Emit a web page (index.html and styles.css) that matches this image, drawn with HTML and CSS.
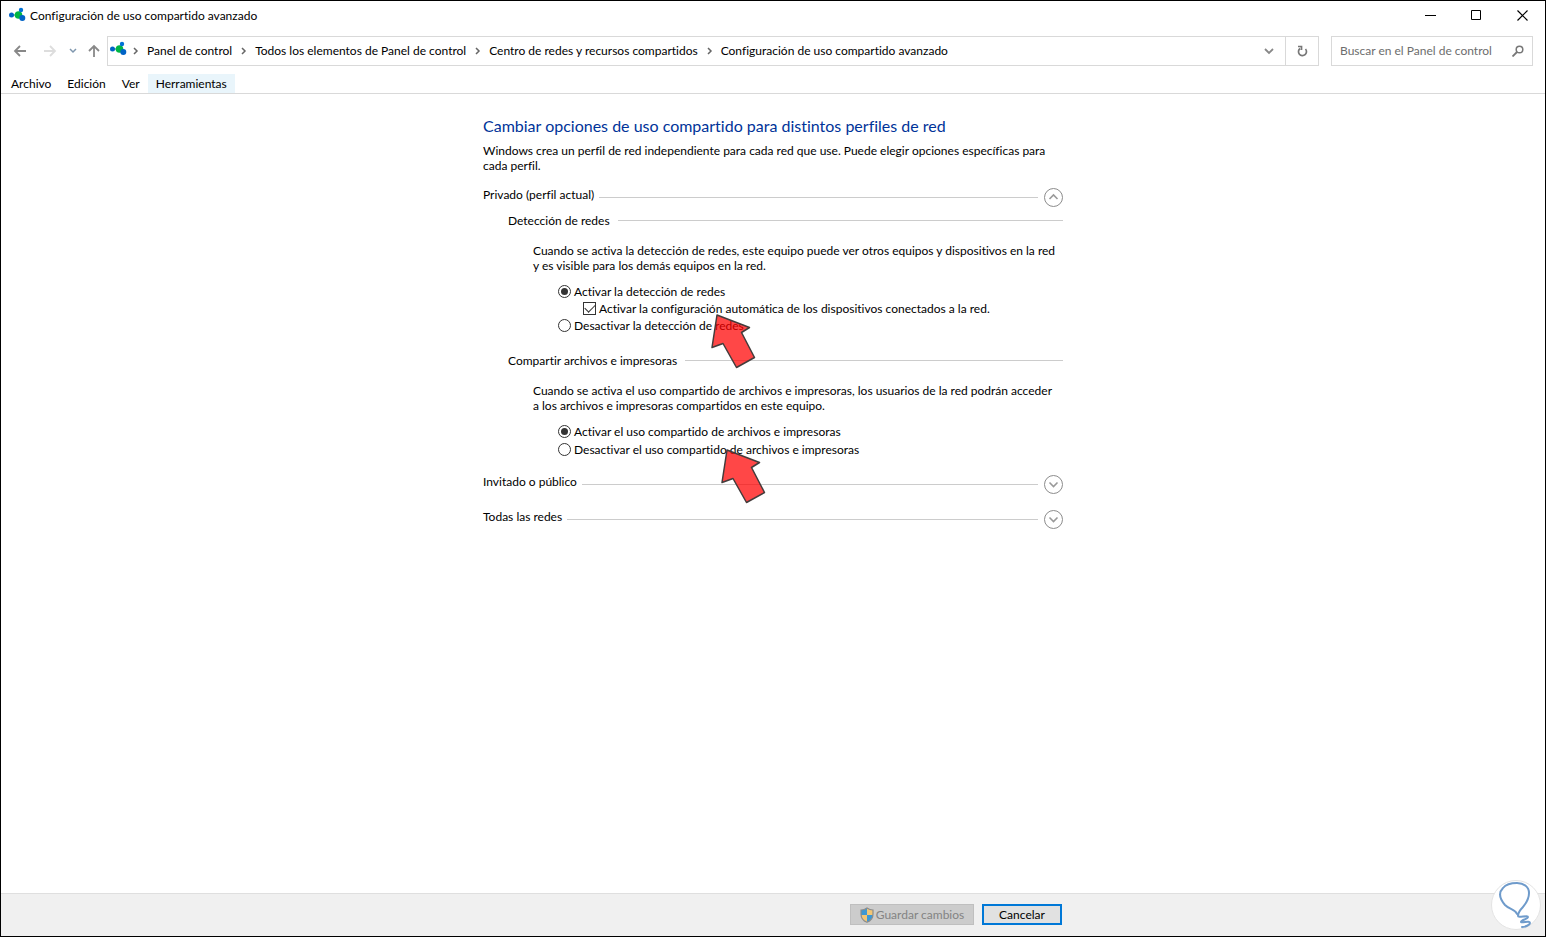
FILE: index.html
```
<!DOCTYPE html>
<html lang="es">
<head>
    <meta charset="UTF-8">
    <meta name="viewport" content="width=device-width, initial-scale=1.0">
    <title>Configuración de uso compartido avanzado</title>
    <link rel="stylesheet" href="styles.css">
</head>
<body>
    <!-- shared symbols -->
    <svg class="symbols" width="0" height="0">
        <symbol id="network" viewBox="0 0 18 16">
            <path d="M3 8h7M10 8l3-5M10 8l4 3" stroke="#0a9a5a" stroke-width="1"/>
            <circle cx="10.500" cy="8" r="3.800" fill="#00b545"/>
            <circle cx="3.500" cy="8" r="2.500" fill="#0063c6"/>
            <circle cx="13" cy="3" r="2.200" fill="#0072d6"/>
            <circle cx="14.300" cy="11" r="3" fill="#0063c6"/>
        </symbol>
        <symbol id="crumb" viewBox="0 0 23 10">
            <path d="M10 2l3 3-3 3" fill="none" stroke="#666" stroke-width="1.500"/>
        </symbol>
        <symbol id="arrow" viewBox="0 0 46 56">
            <path d="M7 2L39.500 14.500 31.500 19.500 44.500 44.500 26.500 54.500 13 30.500 2 34.500Z" fill="#f00" fill-opacity=".72" stroke="#443c3c" stroke-width="1.500" stroke-linejoin="round"/>
        </symbol>
    </svg>

    <div class="window">
        <header>
            <div class="titlebar">
                <svg width="18" height="16"><use href="#network"/></svg>
                <span class="title">Configuración de uso compartido avanzado</span>
                <div class="window-buttons">
                    <button aria-label="Minimizar"><svg width="11" height="11"><path d="M0 5.500h11" stroke="#000"/></svg></button>
                    <button aria-label="Maximizar"><svg width="11" height="11"><path d="M.5.5h9v9h-9z" fill="none" stroke="#000"/></svg></button>
                    <button aria-label="Cerrar"><svg width="11" height="11"><path d="M.5.5l10 10M10.500.5l-10 10" stroke="#000" stroke-width="1.200"/></svg></button>
                </div>
            </div>

            <div class="navbar">
                <div class="nav-buttons">
                    <button aria-label="Atrás"><svg width="14" height="14"><path d="M7 2L2 7l5 5M2 7h11" fill="none" stroke="#888" stroke-width="1.800"/></svg></button>
                    <button aria-label="Adelante" disabled><svg width="14" height="14"><path d="M7 2l5 5-5 5M12 7H1" fill="none" stroke="#ddd" stroke-width="1.800"/></svg></button>
                    <button class="recent" aria-label="Ubicaciones recientes"><svg width="8" height="6"><path d="M1 1l3 3 3-3" fill="none" stroke="#7f97ae" stroke-width="1.500"/></svg></button>
                    <button class="up" aria-label="Subir"><svg width="14" height="14"><path d="M2 7l5-5 5 5M7 2v11" fill="none" stroke="#888" stroke-width="1.800"/></svg></button>
                </div>
                <div class="address">
                    <svg class="address-icon" width="18" height="16"><use href="#network"/></svg>
                    <nav class="crumbs">
                        <svg width="23" height="10"><use href="#crumb"/></svg>
                        <a href="#">Panel de control</a>
                        <svg width="23" height="10"><use href="#crumb"/></svg>
                        <a href="#">Todos los elementos de Panel de control</a>
                        <svg width="23" height="10"><use href="#crumb"/></svg>
                        <a href="#">Centro de redes y recursos compartidos</a>
                        <svg width="23" height="10"><use href="#crumb"/></svg>
                        <a href="#">Configuración de uso compartido avanzado</a>
                    </nav>
                    <button class="history" aria-label="Ubicaciones anteriores"><svg width="10" height="7"><path d="M1 1l4 4 4-4" fill="none" stroke="#888" stroke-width="1.800"/></svg></button>
                    <button class="refresh" aria-label="Actualizar"><svg width="12" height="12"><path d="M4 3.500A4 4 0 1 0 9.500 4M2 1.500h3.500V5" fill="none" stroke="#777" stroke-width="1.700"/></svg></button>
                </div>
                <form class="search">
                    <input type="text" placeholder="Buscar en el Panel de control" aria-label="Buscar en el Panel de control">
                    <button type="button" aria-label="Buscar"><svg width="12" height="12"><circle cx="7.500" cy="4.500" r="3.300" fill="none" stroke="#777" stroke-width="1.500"/><path d="M5 7l-4.500 4.500" stroke="#777" stroke-width="1.800"/></svg></button>
                </form>
            </div>

            <div class="menubar">
                <button>Archivo</button>
                <button>Edición</button>
                <button>Ver</button>
                <button class="active">Herramientas</button>
            </div>
        </header>

        <main>
            <div class="content">
                <h1>Cambiar opciones de uso compartido para distintos perfiles de red</h1>
                <p class="intro">Windows crea un perfil de red independiente para cada red que use. Puede elegir opciones específicas para<br>cada perfil.</p>

                <div class="profile">
                    <h2>Privado (perfil actual)</h2>
                    <span class="rule"></span>
                    <button aria-label="Contraer"><svg width="20" height="20"><circle cx="10.500" cy="10.500" r="9" fill="none" stroke="#8c8c8c"/><path d="M6.500 12l4-4 4 4" fill="none" stroke="#999" stroke-width="1.600"/></svg></button>
                </div>

                <section>
                    <div class="section-title">
                        <h3>Detección de redes</h3>
                        <span class="rule"></span>
                    </div>
                    <p>Cuando se activa la detección de redes, este equipo puede ver otros equipos y dispositivos en la red<br>y es visible para los demás equipos en la red.</p>
                    <div class="options">
                        <label><input type="radio" name="discovery" checked>Activar la detección de redes</label>
                        <label class="nested"><input type="checkbox" checked>Activar la configuración automática de los dispositivos conectados a la red.</label>
                        <label><input type="radio" name="discovery">Desactivar la detección de redes</label>
                    </div>
                    <svg class="pointer pointer-discovery" width="46" height="56"><use href="#arrow"/></svg>
                </section>

                <section>
                    <div class="section-title">
                        <h3>Compartir archivos e impresoras</h3>
                        <span class="rule"></span>
                    </div>
                    <p>Cuando se activa el uso compartido de archivos e impresoras, los usuarios de la red podrán acceder<br>a los archivos e impresoras compartidos en este equipo.</p>
                    <div class="options spaced">
                        <label><input type="radio" name="sharing" checked>Activar el uso compartido de archivos e impresoras</label>
                        <label><input type="radio" name="sharing">Desactivar el uso compartido de archivos e impresoras</label>
                    </div>
                    <svg class="pointer pointer-sharing" width="46" height="56"><use href="#arrow"/></svg>
                </section>

                <div class="profile collapsed">
                    <h2>Invitado o público</h2>
                    <span class="rule"></span>
                    <button aria-label="Expandir"><svg width="20" height="20"><circle cx="10.500" cy="10.500" r="9" fill="none" stroke="#8c8c8c"/><path d="M6.500 8.500l4 4 4-4" fill="none" stroke="#999" stroke-width="1.600"/></svg></button>
                </div>
                <div class="profile collapsed">
                    <h2>Todas las redes</h2>
                    <span class="rule"></span>
                    <button aria-label="Expandir"><svg width="20" height="20"><circle cx="10.500" cy="10.500" r="9" fill="none" stroke="#8c8c8c"/><path d="M6.500 8.500l4 4 4-4" fill="none" stroke="#999" stroke-width="1.600"/></svg></button>
                </div>
            </div>
        </main>

        <footer>
            <div class="actions">
                <button class="save" disabled>
                    <svg width="14" height="16" viewBox="0 0 14 16">
                        <path d="M7 1C5 2.500 3 3 1 3v5h6z" fill="#3d98d3"/>
                        <path d="M7 1c2 1.500 4 2 6 2v5H7z" fill="#f2c675"/>
                        <path d="M1 8c.5 3.500 3 6 6 7V8z" fill="#f2c675"/>
                        <path d="M13 8c-.5 3.500-3 6-6 7V8z" fill="#3d98d3"/>
                        <path d="M7 1C5 2.500 3 3 1 3v4c0 4 2.500 7 6 8.300C10.500 14 13 11 13 7V3c-2 0-4-.5-6-2z" fill="none" stroke="#8b8b8b" stroke-width="1.200"/>
                    </svg>
                    Guardar cambios
                </button>
                <button class="cancel">Cancelar</button>
            </div>
        </footer>

        <svg class="badge" width="52" height="52" viewBox="0 0 52 52">
            <circle cx="26" cy="26" r="24.500" fill="#fff" stroke="#e4e4e4"/>
            <path d="M27 35C25 30 20 31 15 26 9 19 9 13 13 9 17 4 23 4 27 4c7 0 12 4 12 10 0 7-3 10-6 14-3 3-5 6-5 9 0 2 10-1 10 1 0 2-7 3-7 5 2 1 9-2 9 1 0 2-5 4-8 4" fill="none" stroke="#6f9bcb" stroke-width="2" stroke-linecap="round" stroke-linejoin="round"/>
        </svg>
    </div>
</body>
</html>
```
FILE: styles.css
```
* {
    box-sizing: border-box;
}
body {
    margin: 0;
    font-family: Lato, "Open Sans", sans-serif;
    font-size: 12px;
    font-variant-ligatures: none;
    line-height: 15px;
    color: #000;
    background: #fff;
}
h1, h2, h3, p {
    margin: 0;
    font-weight: normal;
}
h2, h3 {
    font-size: 12px;
}
button, input {
    font: inherit;
    font-variant-ligatures: none;
    color: inherit;
}
button {
    padding: 0;
    border: none;
    background: none;
}
svg {
    display: block;
    flex-shrink: 0;
}
.symbols {
    position: absolute;
}
.window {
    position: relative;
    display: flex;
    flex-direction: column;
    min-height: 100vh;
    border: 1px solid #000;
}

/* title bar */
.titlebar {
    display: flex;
    align-items: center;
    height: 28px;
    padding-left: 7px;
}
.title {
    padding-left: 4px;
}
.window-buttons {
    display: flex;
    margin-left: auto;
}
.window-buttons button {
    display: flex;
    align-items: center;
    justify-content: center;
    width: 46px;
    height: 28px;
}

/* navigation */
.navbar {
    display: flex;
    align-items: center;
    gap: 12px;
    padding: 7px 12px 8px;
}
.nav-buttons {
    display: flex;
    align-items: center;
    gap: 16px;
    margin-right: -6px;
}
.nav-buttons .recent {
    margin-right: -6px;
    margin-left: -4px;
}
.address {
    display: flex;
    flex: 1;
    align-items: center;
    height: 30px;
    padding-left: 1px;
    border: 1px solid #d9d9d9;
}
.address-icon {
    margin-bottom: 4px;
}
.crumbs {
    display: flex;
    flex: 1;
    align-items: center;
    margin-left: -3px;
    white-space: nowrap;
}
.crumbs a {
    padding-bottom: 2px;
    color: #000;
    text-decoration: none;
}
.history, .refresh {
    display: flex;
    align-items: center;
    justify-content: center;
    width: 32px;
    height: 28px;
}
.refresh {
    width: 33px;
    border-left: 1px solid #d9d9d9;
}
.search {
    display: flex;
    align-items: center;
    width: 202px;
    height: 30px;
    padding: 0 8px;
    border: 1px solid #d9d9d9;
}
.search input {
    flex: 1;
    min-width: 0;
    padding: 0 0 2px;
    border: none;
    outline: none;
}
.search input::placeholder {
    color: #6d6d6d;
    opacity: 1;
}

/* menu */
.menubar {
    display: flex;
    padding-left: 2px;
    border-bottom: 1px solid #d9d9d9;
}
.menubar button {
    height: 19px;
    padding: 0 8px;
}
.menubar .active {
    background: #e9f5fb;
}

/* settings */
main {
    flex: 1;
    padding: 21px 0;
}
.content {
    width: 100%;
    max-width: 580px;
    margin: 0 auto;
}
h1 {
    margin-bottom: 6px;
    font-size: 16px;
    line-height: 22px;
    color: #003399;
}
.intro {
    white-space: nowrap;
}
.rule {
    flex: 1;
    height: 1px;
    background: #ccc;
}
.profile {
    display: flex;
    align-items: center;
    gap: 5px;
    height: 20px;
    margin-top: 14px;
}
.profile h2 {
    padding-bottom: 6px;
}
.profile.collapsed {
    margin-top: 15px;
}
section {
    position: relative;
    padding-left: 25px;
}
section + section {
    margin-top: 19px;
}
.profile + section {
    margin-top: 6px;
}
section + .profile.collapsed {
    margin-top: 16px;
}
.section-title {
    display: flex;
    align-items: center;
    gap: 8px;
}
section p {
    margin-top: 15px;
    padding-left: 25px;
    white-space: nowrap;
}
.options {
    display: flex;
    flex-direction: column;
    margin-top: 10px;
    padding-left: 50px;
}
.options.spaced {
    gap: 1px;
}
.options label {
    display: flex;
    align-items: center;
    gap: 3px;
    height: 17px;
}
.options .nested {
    padding-left: 25px;
}
.options input {
    display: grid;
    place-items: center;
    width: 13px;
    height: 13px;
    margin: 0;
    appearance: none;
    border: 1px solid #333;
    background: #fff;
}
.options input[type="radio"] {
    border-radius: 50%;
}
.options input[type="radio"]:checked::before {
    content: "";
    width: 7px;
    height: 7px;
    border-radius: 50%;
    background: #333;
}
.options input[type="checkbox"]:checked::before {
    content: "";
    width: 9px;
    height: 5px;
    margin-bottom: 3px;
    border: solid #333;
    border-width: 0 0 1px 1px;
    transform: rotate(-45deg);
}

/* arrows laid over the options */
.pointer {
    position: absolute;
    z-index: 1;
    pointer-events: none;
}
.pointer-discovery {
    top: 100px;
    left: 227px;
}
.pointer-sharing {
    top: 95px;
    left: 237px;
}

/* footer */
footer {
    padding: 10px 0 11px;
    border-top: 1px solid #dfdfdf;
    background: #f0f0f0;
}
.actions {
    display: flex;
    justify-content: flex-end;
    gap: 8px;
    max-width: 580px;
    margin: 0 auto;
    padding-right: 1px;
}
.actions button {
    display: flex;
    align-items: center;
    justify-content: center;
    height: 21px;
}
.actions .save {
    gap: 2px;
    width: 124px;
    border: 1px solid #bfbfbf;
    background: #ccc;
    color: #838383;
}
.actions .cancel {
    width: 80px;
    border: 2px solid #0078d7;
    background: #e1e1e1;
}
.badge {
    position: absolute;
    right: 3px;
    bottom: 5px;
}
```
